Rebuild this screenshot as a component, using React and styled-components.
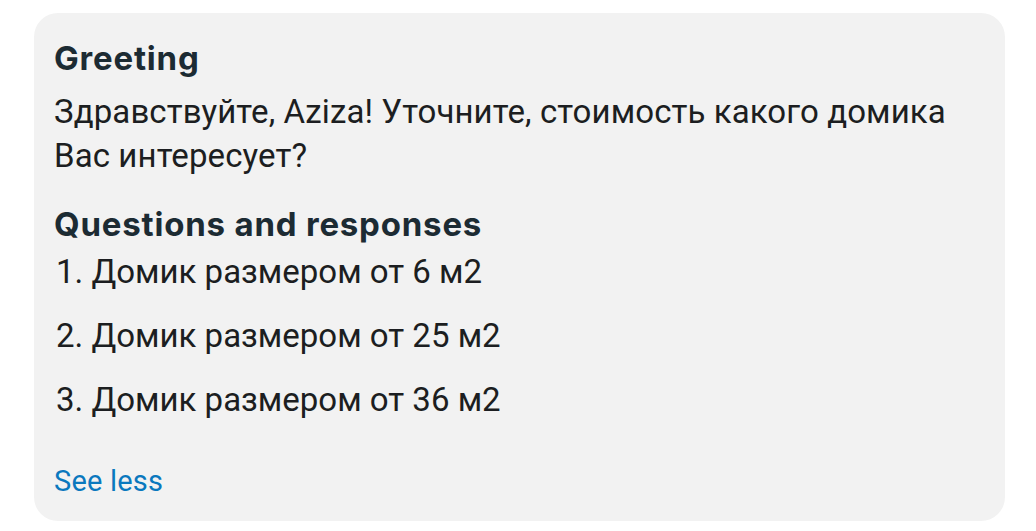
import React from "react";
import styled, { createGlobalStyle } from "styled-components";

const Global = createGlobalStyle`
  body {
    margin: 0;
    background: #ffffff;
    font-family: Roboto, "Liberation Sans", sans-serif;
  }
`;

const Page = styled.div`
  padding: 13px 31px 10px 34px;
`;

const Card = styled.div`
  background: #f2f2f2;
  border-radius: 24px;
  padding: 23px 20px 22px 20px;
  display: flex;
  flex-direction: column;
  box-sizing: border-box;
  height: 508px;
`;

const Title = styled.h2`
  margin: 0;
  font-family: Inter, "Noto Sans", sans-serif;
  font-weight: 700;
  font-size: 33px;
  letter-spacing: 0.8px;
  line-height: 44px;
  color: #1c2b33;
  margin-top: ${(p) => p.$top || 0}px;
`;

const Text = styled.p`
  margin: 0;
  font-size: 33px;
  letter-spacing: 0.1px;
  line-height: 44px;
  color: #1c1e21;
  padding-top: 10px;
`;

const List = styled.ol`
  margin: 4px 0 0 0;
  padding: 0;
  list-style: none;
  display: flex;
  flex-direction: column;
  gap: 20px;
`;

const Item = styled.li`
  font-size: 33px;
  line-height: 44px;
  color: #1c1e21;
  padding-left: 2px;
`;

const Link = styled.a`
  margin-top: auto;
  font-size: 29px;
  letter-spacing: 0.2px;
  line-height: 36px;
  color: #0a78be;
  text-decoration: none;
  cursor: pointer;
`;

const items = [
  "Домик размером от 6 м2",
  "Домик размером от 25 м2",
  "Домик размером от 36 м2",
];

export default function App() {
  return (
    <Page>
      <Global />
      <Card>
        <Title>Greeting</Title>
        <Text>
          Здравствуйте, Aziza! Уточните, стоимость какого домика Вас интересует?
        </Text>
        <Title $top={24}>Questions and responses</Title>
        <List>
          {items.map((t, i) => (
            <Item key={i}>
              {i + 1}. {t}
            </Item>
          ))}
        </List>
        <Link>See less</Link>
      </Card>
    </Page>
  );
}
